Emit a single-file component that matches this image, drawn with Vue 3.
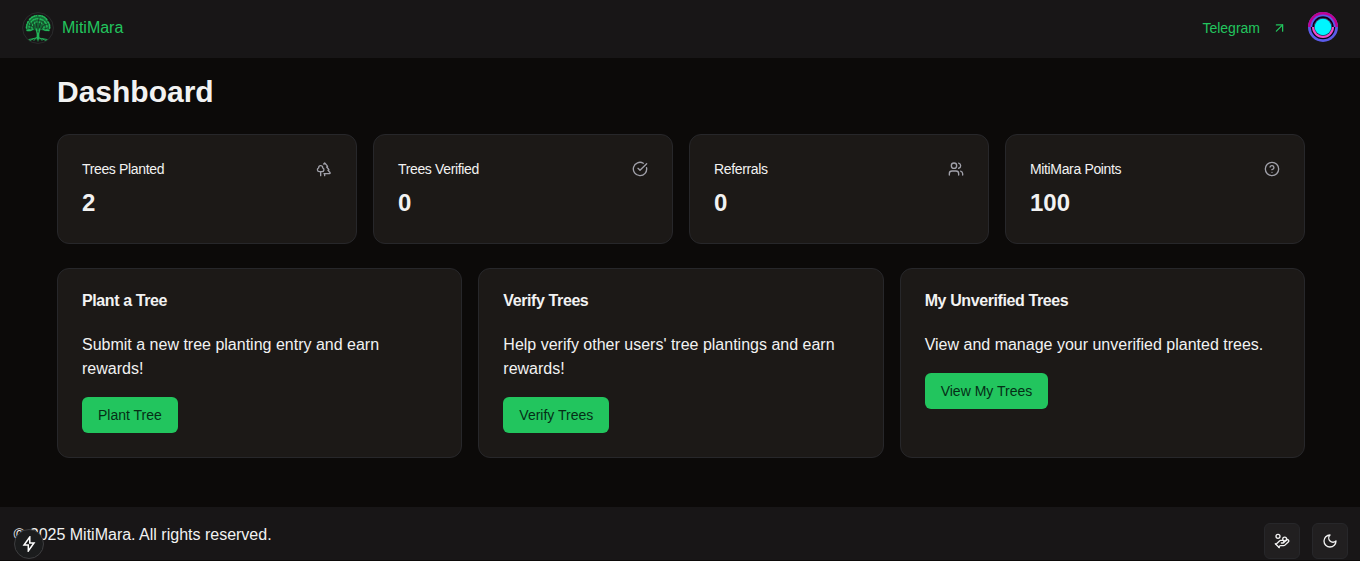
<script setup>
const stats = [
  {
    label: 'Trees Planted', value: '2',
    paths: ['M10 10v.2A3 3 0 0 1 8.9 16H5a3 3 0 0 1-1-5.8V10a3 3 0 0 1 6 0Z', 'M7 16v6', 'M13 19v3', 'M12 19h8.3a1 1 0 0 0 .7-1.7L18 14h.3a1 1 0 0 0 .7-1.7L16 9h.2a1 1 0 0 0 .8-1.7L13 3l-1.4 1.5'],
  },
  {
    label: 'Trees Verified', value: '0',
    paths: ['M21.801 10A10 10 0 1 1 17 3.335', 'm9 11 3 3L22 4'],
  },
  {
    label: 'Referrals', value: '0',
    paths: ['M16 21v-2a4 4 0 0 0-4-4H6a4 4 0 0 0-4 4v2', 'M5 7a4 4 0 1 0 8 0a4 4 0 1 0-8 0', 'M22 21v-2a4 4 0 0 0-3-3.87', 'M16 3.13a4 4 0 0 1 0 7.75'],
  },
  {
    label: 'MitiMara Points', value: '100',
    paths: ['M2 12a10 10 0 1 0 20 0a10 10 0 1 0-20 0', 'M9.09 9a3 3 0 0 1 5.83 1c0 2-3 3-3 3', 'M12 17h.01'],
  },
]
const actions = [
  { title: 'Plant a Tree', text: 'Submit a new tree planting entry and earn rewards!', button: 'Plant Tree' },
  { title: 'Verify Trees', text: "Help verify other users' tree plantings and earn rewards!", button: 'Verify Trees' },
  { title: 'My Unverified Trees', text: 'View and manage your unverified planted trees.', button: 'View My Trees' },
]
</script>

<template>
  <div class="page">
    <header class="header">
      <a class="brand">
        <svg class="logo" viewBox="0 0 32 32" fill="none">
          <circle cx="16" cy="16" r="15.4" stroke="#2b2b2d" stroke-width="1" />
          <path d="M4 17c0-2 0-4 1.5-6C7 7 10 3.500 14 3c5-1 9 1 11 5 2 2 3.500 6 3 9-1 2-3 2.500-5 2l-4-1-2 1h-2l-3-1-4 1.500C6 19.500 4.500 19 4 17Z" fill="#146b36" />
          <g stroke="#23b75a" stroke-linecap="round">
            <path d="M15.300 27c.7-4 0-7-1-10M16.700 27c-.7-4 0-7 1-10" stroke-width="1.4" />
            <path d="M8 28.500l4-2 3-1 4 1 5 2M7 27.500l5-1M25 27.500l-5-1M14 26l-2 2.500M18 26l2 2.500M16 26v3" stroke-width=".9" />
            <path d="M4.500 16c0-3 1-5 2-7M7.500 7.500c2-2 4-3.500 7-3.800M17 3.700c4 0 6 1.500 8 4.300M26 10c1.500 2 2 4 1.500 7" stroke-width="1.600" stroke-dasharray="1.200 1.500" />
            <path d="M7 17c0-3 0-5 3-8 3-3 8-3 12 0 3 3 3 5 3 8M10 16c0-3 2-6 6-6s6 3 6 6" stroke-width="1.500" stroke-dasharray="1.100 1.400" />
            <path d="M5 18.500l4-.5 2-1M27 18.500l-4-.5-2-1" stroke-width="1.300" />
          </g>
          <g stroke="#181617" stroke-linecap="round" stroke-width=".6">
            <path d="M13 18l-3-4-4-1M12 15l-1-5M15 16l-1-6M17 16l2-6M19 17l3-4 4-1M21 14v-5M9 13l-1-3M16 11l1-5M6 16l3 1M26 16l-3 1" />
          </g>
        </svg>
        <span>MitiMara</span>
      </a>
      <nav class="nav">
        <a class="telegram">Telegram
          <svg class="icon arrow" viewBox="0 0 24 24"><path d="M7 7h10v10" /><path d="M7 17 17 7" /></svg>
        </a>
        <svg class="avatar" viewBox="0 0 30 30">
          <circle cx="15" cy="15" r="15" fill="#5b5bea" />
          <path d="M0 15a15 15 0 0 1 30 0z" fill="#c00092" />
          <path d="M2.5 15a12.5 12.5 0 0 1 25 0z" fill="#5b5bea" />
          <path d="M4.300 15a10.700 10.700 0 0 1 21.400 0z" fill="#080416" />
          <path d="M2.800 15a12.200 12.200 0 0 0 24.400 0z" fill="#080416" />
          <path d="M4 15a11 11 0 0 0 22 0z" fill="#f34bc8" />
          <path d="M6 15a9 9 0 0 1 18 0z" fill="#c03ab0" />
          <circle cx="15" cy="15" r="8.900" fill="#173557" />
          <circle cx="15" cy="15" r="8.300" fill="#00f5ff" />
        </svg>
      </nav>
    </header>

    <main class="main">
      <h1>Dashboard</h1>
      <section class="stats">
        <article v-for="s in stats" :key="s.label" class="card">
          <div class="stat-head">
            <h3>{{ s.label }}</h3>
            <svg class="icon muted" viewBox="0 0 24 24"><path v-for="p in s.paths" :key="p" :d="p" /></svg>
          </div>
          <div class="value">{{ s.value }}</div>
        </article>
      </section>
      <section class="actions">
        <article v-for="a in actions" :key="a.title" class="card">
          <h2>{{ a.title }}</h2>
          <p>{{ a.text }}</p>
          <button class="primary">{{ a.button }}</button>
        </article>
      </section>
    </main>

    <footer class="footer">
      <p>© 2025 MitiMara. All rights reserved.</p>
      <div class="tools">
        <button class="tool">
          <svg class="icon" viewBox="0 0 24 24">
            <path d="M11 15h2a2 2 0 1 0 0-4h-3c-.6 0-1.1.2-1.4.6L3 17" />
            <path d="m7 21 1.6-1.4c.3-.4.8-.6 1.4-.6h4c1.1 0 2.1-.4 2.8-1.2l4.6-4.4a2 2 0 0 0-2.75-2.91l-4.2 3.9" />
            <path d="m2 16 6 6" /><circle cx="16" cy="9" r="2.9" /><circle cx="6" cy="5" r="3" />
          </svg>
        </button>
        <button class="tool">
          <svg class="icon" viewBox="0 0 24 24"><path d="M12 3a6 6 0 0 0 9 9 9 9 0 1 1-9-9Z" /></svg>
        </button>
      </div>
    </footer>

    <div class="indicator">
      <svg viewBox="0 0 16 16" fill="none"><path d="M8.800 1 3 9.100H7.300V15L13 6.900H8.800Z" stroke="#fff" stroke-width="1.5" /></svg>
    </div>
  </div>
</template>

<style>
body { margin: 0; background: #0c0a09; }
</style>

<style scoped>
* { box-sizing: border-box; }
h1, h2, h3, p { margin: 0; }
button { font-family: inherit; border: 0; }
.page { height: 561px; display: flex; flex-direction: column; overflow: hidden; background: #0c0a09; color: #f2f2f2; font: 16px/24px "Liberation Sans", Arial, sans-serif; }
.header { height: 58px; flex: none; display: flex; justify-content: space-between; padding: 0 22px; background: #181617; color: #22c55e; }
.brand { display: flex; align-items: center; gap: 8px; height: 55px; }
.logo { width: 32px; height: 32px; }
.nav { display: flex; align-items: center; gap: 20px; height: 54px; }
.telegram { display: flex; align-items: center; gap: 12px; font-size: 14px; line-height: 20px; padding-top: 2px; }
.icon { width: 16px; height: 16px; fill: none; stroke: currentColor; stroke-width: 2; stroke-linecap: round; stroke-linejoin: round; display: block; }
.arrow { width: 15px; margin-right: 1px; }
.avatar { width: 30px; height: 30px; }
.main { width: 1248px; margin-left: 57px; padding-top: 16px; flex: 1; }
h1 { font-size: 30px; line-height: 36px; font-weight: 700; margin-bottom: 24px; }
.stats { display: grid; grid-template-columns: repeat(4, 1fr); gap: 16px; margin-bottom: 24px; }
.actions { display: grid; grid-template-columns: repeat(3, 1fr); gap: 16px; }
.card { border: 1px solid #27272a; border-radius: 12px; background: #1c1917; padding: 24px; }
.stat-head { display: flex; align-items: center; justify-content: space-between; margin-bottom: 8px; }
h3 { font-size: 14px; line-height: 20px; font-weight: 400; letter-spacing: -0.35px; }
.muted { color: #a1a1aa; }
.value { font-size: 24px; line-height: 32px; font-weight: 700; }
h2 { font-size: 16px; line-height: 16px; font-weight: 700; letter-spacing: -0.4px; margin-bottom: 24px; }
.primary { display: block; height: 36px; margin-top: 16px; padding: 0 16px; border-radius: 6px; background: #22c55e; color: #052e16; font-size: 14px; line-height: 20px; }
.footer { height: 54px; flex: none; display: flex; justify-content: space-between; padding: 16px 12px 0 13.5px; background: #181617; border-bottom: 1px solid #0c0a09; }
.tools { display: flex; gap: 12px; }
.tool { width: 36px; height: 36px; display: grid; place-items: center; padding: 0; border: 1px solid #27272a; border-radius: 6px; background: #211f20; color: #f2f2f2; }
.indicator { position: absolute; left: 14px; top: 529px; width: 30px; height: 30px; border-radius: 50%; background: #1b1c1d; border: 1px solid #3d3d3f; display: grid; place-items: center; }
.indicator svg { width: 16px; height: 16px; }
</style>
